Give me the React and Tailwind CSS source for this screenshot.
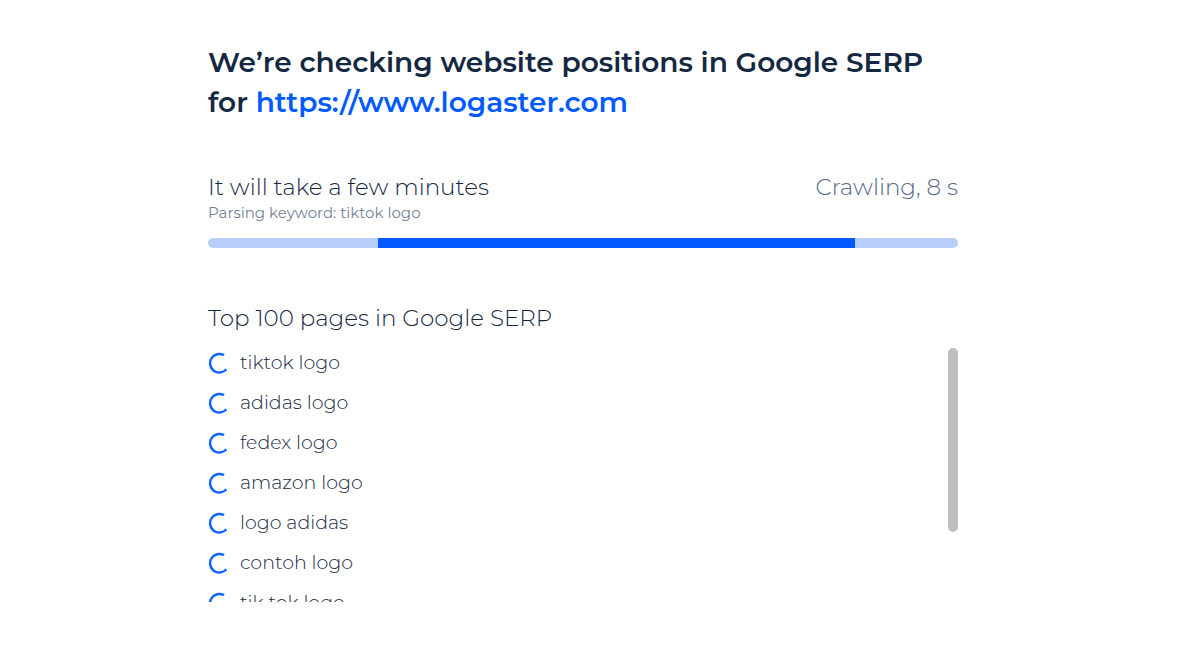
const keywords = ['tiktok logo', 'adidas logo', 'fedex logo', 'amazon logo', 'logo adidas', 'contoh logo', 'tik tok logo'];

function Spinner() {
  return (
    <svg className="h-[22px] w-5 shrink-0" viewBox="0 0 20 22" fill="none" aria-hidden="true">
      <path d="M16 3.2A9.3 9.3 0 1 0 18.4 17.3" stroke="#1466ff" strokeWidth="2.5" />
    </svg>
  );
}

export default function App() {
  return (
    <div className="bg-white pr-7 font-['Montserrat','Open_Sans',sans-serif] text-[#152842]">
      <main className="mx-auto w-full max-w-[750px] pt-[42px]">
        <h1 className="text-[28px] leading-10 font-semibold">
          We’re checking website positions in Google SERP
          <br />
          for <a href="https://www.logaster.com" className="text-[#005aff]">https://www.logaster.com</a>
        </h1>

        <section className="mt-[50px]">
          <div className="flex items-start justify-between text-[23px] leading-[30px] font-light">
            <p>It will take a few minutes</p>
            <p className="text-[#53688a]">Crawling, 8 s</p>
          </div>
          <p className="text-[15px] leading-[22px] text-[#718299]">Parsing keyword: tiktok logo</p>
          <div className="mt-3.5 flex h-2.5 overflow-hidden rounded-full bg-[#b7cef8]" role="progressbar" aria-label="Crawling progress">
            <div className="ml-[22.6%] w-[63.7%] bg-[#005aff]" />
          </div>
        </section>

        <section className="mt-[54px]">
          <h2 className="text-[23px] leading-8 font-light">Top 100 pages in Google SERP</h2>
          <div className="mt-3.5 flex h-[254px]">
            <ul className="flex flex-1 flex-col gap-2.5 overflow-y-auto [scrollbar-width:none]">
              {keywords.map((keyword) => (
                <li key={keyword} className="flex h-[30px] shrink-0 items-center gap-3 text-[19px] leading-[30px] font-light">
                  <Spinner />
                  {keyword}
                </li>
              ))}
            </ul>
            <div className="h-[184px] w-2.5 rounded-full bg-[#bfbfbf]" />
          </div>
        </section>
      </main>
    </div>
  );
}
